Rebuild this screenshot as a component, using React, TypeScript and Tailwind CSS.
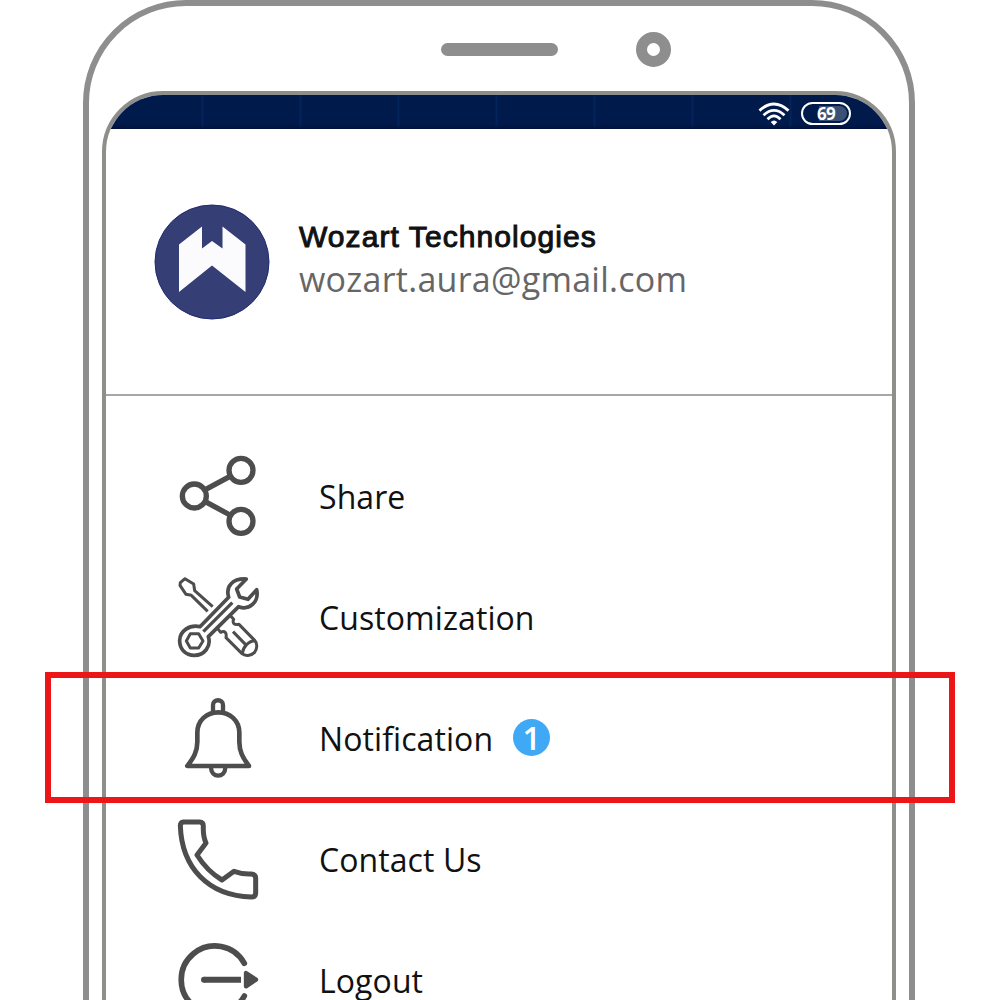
import React from "react";

const ink = "#4d4d4d";

type IconProps = { viewBox: string; children: React.ReactNode };

function MenuIcon({ viewBox, children }: IconProps) {
  return (
    <svg
      className="h-[121px] w-[120px] shrink-0"
      viewBox={viewBox}
      fill="none"
      stroke={ink}
      strokeWidth={16}
      strokeLinecap="round"
      strokeLinejoin="round"
    >
      {children}
    </svg>
  );
}

const ShareIcon = () => (
  <MenuIcon viewBox="0 -12 360 363">
    <circle cx="103" cy="168" r="36" />
    <circle cx="243" cy="91" r="36" />
    <circle cx="243" cy="244" r="36" />
    <path d="M136 149L210 109M136 185L210 225" />
  </MenuIcon>
);

const ToolsIcon = () => (
  <MenuIcon viewBox="0 -24 360 363">
    <g strokeWidth={9} strokeLinecap="butt">
      <path d="M143 139L94 91L78 88L60 61L61 53L75 41L101 57L104 77L158 125" />
      <path
        strokeWidth={11}
        d="M120 185L206 97C196 63 218 40 259 42L230 72L239 96L264 103L290 74C298 112 267 137 236 125L145 215C155 245 132 271 103 271C76 271 58 251 59 226C60 198 88 178 120 185Z"
      />
      <path strokeWidth={10} d="M130 200L217 113" />
      <path d="M91 206H116L129 228L116 249H91L79 228Z" />
      <path d="M212 153L221 163C216 174 223 181 237 178L284 226C293 235 292 253 283 263C273 273 255 274 246 266L198 218C201 203 194 196 182 202L173 191" />
      <path d="M219 200L257 239M247 265C249 246 266 227 285 227" />
    </g>
  </MenuIcon>
);

const BellIcon = () => (
  <MenuIcon viewBox="0 -21 360 363">
    <path
      strokeWidth={14}
      d="M82 243H267C248 218 238 199 238 170V143C238 106 209 82 175 82C140 82 112 106 112 143V170C112 200 101 218 82 243Z"
    />
    <path strokeWidth={13} d="M159 79V60C159 41 189 41 189 60V79M153 248C154 280 195 280 196 248" />
  </MenuIcon>
);

const PhoneIcon = () => (
  <MenuIcon viewBox="0 -18 360 363">
    <path
      strokeWidth={15}
      d="M71 51H119Q130 51 130 63C129 86 132 101 138 114L111 150C131 182 156 207 186 225L222 199C239 205 257 208 274 207Q287 208 287 220V263Q287 276 274 276C146 273 65 189 61 62Q61 52 71 51Z"
    />
  </MenuIcon>
);

const LogoutIcon = () => (
  <MenuIcon viewBox="0 0 360 363">
    <path strokeWidth={17} d="M253 130A101 101 0 1 0 253 228" />
    <path strokeWidth={18} strokeLinecap="butt" d="M132 179.500H243" />
    <circle cx="132" cy="179.500" r="9" fill={ink} stroke="none" />
    <path fill={ink} strokeWidth={13} d="M258 159V199L288 179Z" />
  </MenuIcon>
);

const items = [
  { label: "Share", Icon: ShareIcon },
  { label: "Customization", Icon: ToolsIcon },
  { label: "Notification", Icon: BellIcon, badge: 1 },
  { label: "Contact Us", Icon: PhoneIcon },
  { label: "Logout", Icon: LogoutIcon },
];

function StatusBar() {
  return (
    <div className="flex h-[34px] items-center justify-end bg-[#001a4b] bg-[repeating-linear-gradient(90deg,transparent_0_95px,#03235a_96px_97px,transparent_98px)] pr-[41px] shadow-[inset_0_-2px_3px_#001238]">
      <svg className="mt-[3px] mr-[11px] h-[24px] w-[32px]" viewBox="0 0 32 24" fill="none" stroke="#fff" strokeWidth="2.800">
        <path d="M1.500 8.600Q16 -4.500 30.500 8.600M5.500 13.200Q16 3.500 26.500 13.200M9.500 17.300Q16 10.500 22.500 17.300" />
        <path d="M12.700 20Q16 17 19.300 20L16 23.500Z" fill="#fff" stroke="none" />
      </svg>
      <div className="relative mt-[3px] flex h-[23px] w-[50px] items-center justify-center rounded-full border-2 border-white">
        <div className="absolute top-[2px] right-[2px] h-[15px] w-[28px] rounded-r-full bg-[#3b5075]" />
        <span className="relative mb-px font-['Open_Sans'] text-[17px] leading-none font-bold tracking-[-0.800px] text-white">69</span>
      </div>
    </div>
  );
}

function Profile() {
  return (
    <div className="flex h-[267px] items-center border-b-2 border-[#a7a7a7] pl-[48px]">
      <svg className="h-[116px] w-[116px] shrink-0" viewBox="0 0 116 116">
        <circle cx="58" cy="58" r="57" fill="#353e75" stroke="#202b70" strokeWidth="1" />
        <path fill="#fbfbfe" d="M25 40.500L48 22.500V44.500L58 37L68.500 44.500V22.500L91.500 40.500V88L58 61.500L25 88Z" />
      </svg>
      <div className="mb-[5px] ml-[29px] flex flex-col whitespace-nowrap">
        <span className="font-['Liberation_Sans'] text-[30px] leading-[40px] tracking-[1.080px] text-[#111] [-webkit-text-stroke:1px_#111]">
          Wozart Technologies
        </span>
        <span className="font-['Open_Sans'] text-[34px] leading-[44px] tracking-[0.260px] text-[#666]">wozart.aura@gmail.com</span>
      </div>
    </div>
  );
}

export default function App() {
  return (
    <div className="relative h-[1000px] w-[1000px] overflow-hidden bg-white">
      <div className="ml-[83px] h-[1200px] w-[832px] rounded-t-[103px] border-[6px] border-[#8e8e8e]">
        <div className="relative flex h-[85px] items-center justify-center">
          <div className="mt-px h-[13px] w-[117px] rounded-full bg-[#8e8e8e]" />
          <div className="absolute top-[26px] left-[547px] h-[35px] w-[35px] rounded-full border-[11px] border-[#8e8e8e]" />
        </div>
        <div className="mx-auto h-[1100px] w-[794px] overflow-hidden rounded-t-[61px] border-4 border-[#8e8e8a]">
          <StatusBar />
          <Profile />
          <ul className="pt-[40px] pl-[54px]">
            {items.map(({ label, Icon, badge }) => (
              <li key={label} className="flex h-[121px] items-center">
                <Icon />
                <span className="ml-[39px] font-['Open_Sans'] text-[32px] tracking-[0.080px] whitespace-nowrap text-[#111]">{label}</span>
                {badge && (
                  <span className="mb-[2px] ml-[20px] flex h-[37px] w-[37px] items-center justify-center rounded-full bg-[#3fa9f5] font-['Open_Sans'] text-[32px] leading-none font-semibold text-white">
                    {badge}
                  </span>
                )}
              </li>
            ))}
          </ul>
        </div>
      </div>
      <div className="absolute top-[672px] left-[45px] h-[131px] w-[910px] border-[6px] border-[#ec1518]" />
    </div>
  );
}
